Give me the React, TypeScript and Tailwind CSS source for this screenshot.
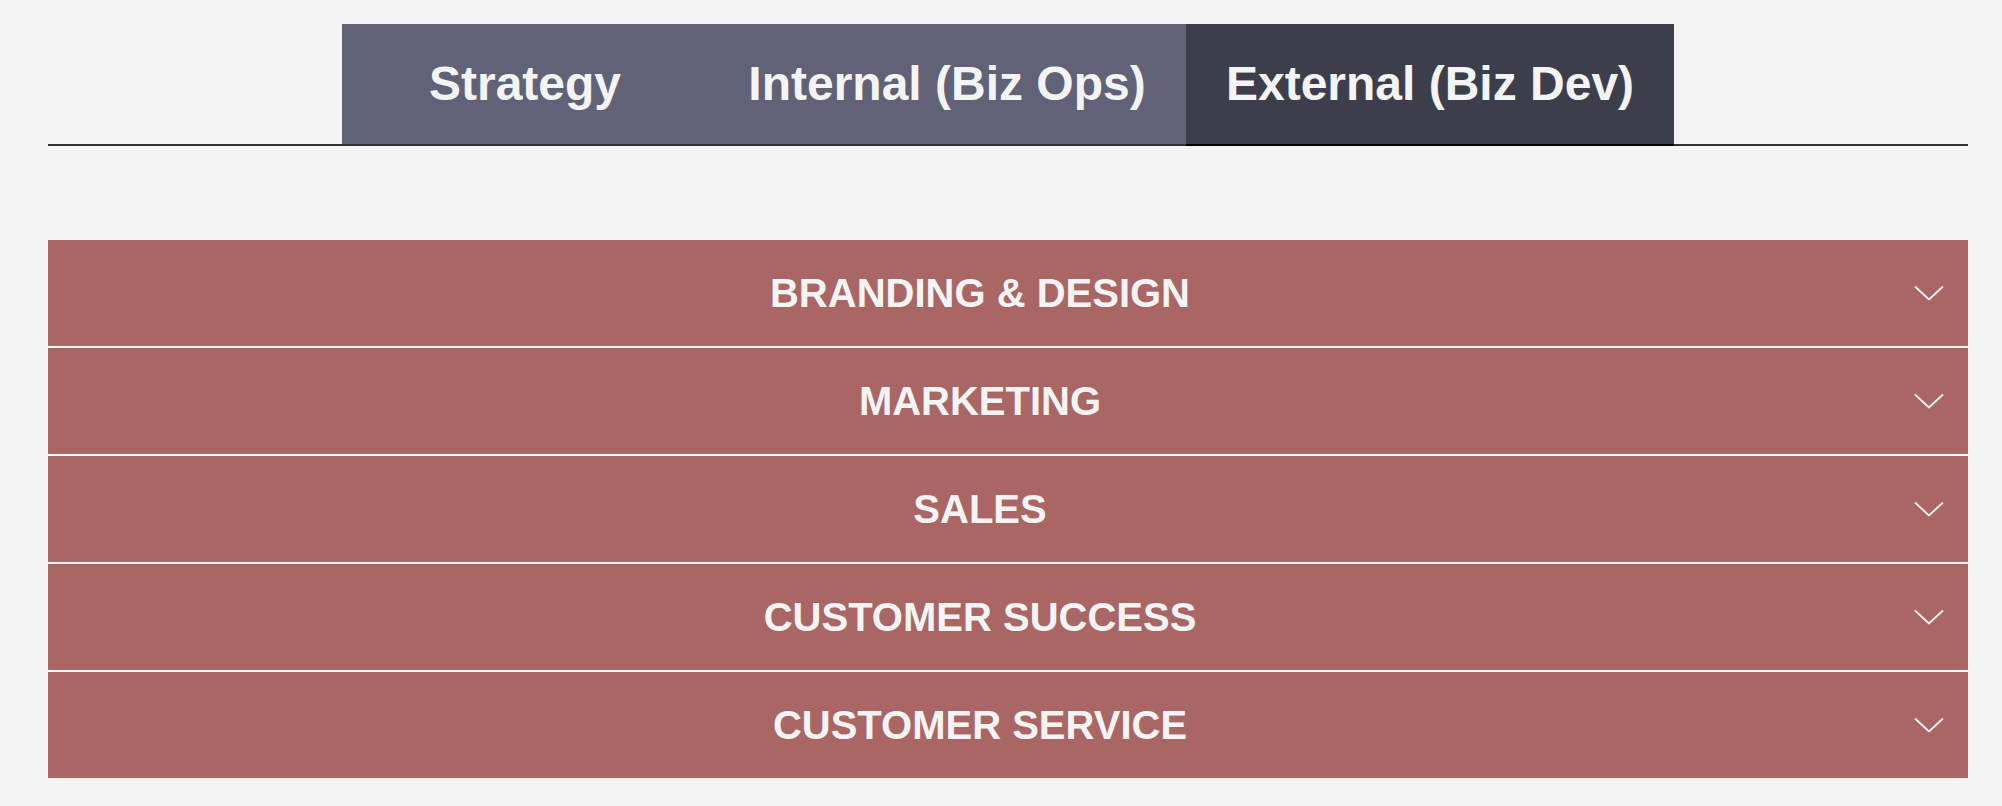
import { useState } from 'react';

const tabs = [
  { label: 'Strategy', w: 'w-[366px]' },
  { label: 'Internal (Biz Ops)', w: 'w-[478px]' },
  { label: 'External (Biz Dev)', w: 'w-[488px]' },
];

const sections = ['BRANDING & DESIGN', 'MARKETING', 'SALES', 'CUSTOMER SUCCESS', 'CUSTOMER SERVICE'];

function Chevron() {
  return (
    <svg width="30" height="16" viewBox="0 0 30 16" fill="none">
      <path d="M1 1.5 L15 14.5 L29 1.5" stroke="#f4f4f4" strokeWidth="1.8" />
    </svg>
  );
}

export default function App() {
  const [active, setActive] = useState(2);
  const [open, setOpen] = useState<number | null>(null);

  return (
    <div className="min-h-[806px] w-full bg-[#f4f4f4] pl-[48px] pr-[34px] pt-[24px] font-['Liberation_Sans',Arial,sans-serif]">
      {/* Tabs */}
      <div className="flex justify-center border-b-2 border-[#333333]">
        {tabs.map((t, i) => (
          <button
            key={t.label}
            onClick={() => setActive(i)}
            className={`${t.w} h-[122px] -mb-[2px] border-b-2 flex items-center justify-center text-[48px] font-bold text-[#f4f4f4] leading-none ${active === i ? 'bg-[#3d3e4b] border-black' : 'bg-[#616178] border-[#333333]'}`}
          >
            {t.label}
          </button>
        ))}
      </div>

      {/* Accordion */}
      <div className="mt-[94px] flex flex-col gap-[2px] bg-white">
        {sections.map((s, i) => (
          <button
            key={s}
            onClick={() => setOpen(open === i ? null : i)}
            className="h-[106px] w-full flex items-center bg-[#a96664]"
          >
            <span className="flex-1 text-center text-[40px] font-bold text-[#f4f4f4] leading-none">{s}</span>
            <span className="w-[56px] pl-[2px] flex items-center"><Chevron /></span>
          </button>
        ))}
      </div>
    </div>
  );
}
